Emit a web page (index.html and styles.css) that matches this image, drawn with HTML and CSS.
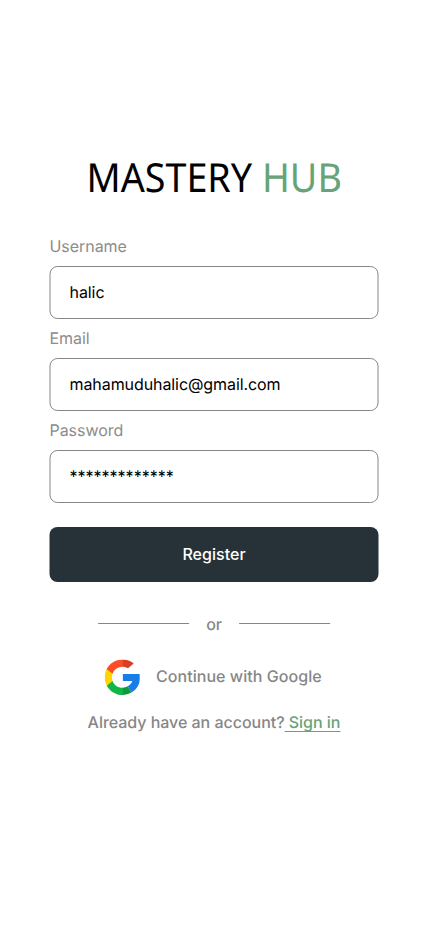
FILE: index.html
```html
<!DOCTYPE html>
<html lang="en">
<head>
<meta charset="utf-8">
<title>Mastery Hub</title>
<link rel="stylesheet" href="styles.css">
</head>
<body>
<main class="page">
  <h1 class="brand">MASTERY <span class="accent">HUB</span></h1>
  <form class="form">
    <label class="label" for="username">Username</label>
    <div class="field" id="username">halic</div>
    <label class="label" for="email">Email</label>
    <div class="field" id="email">mahamuduhalic@gmail.com</div>
    <label class="label" for="password">Password</label>
    <div class="field" id="password">*************</div>
    <button class="submit" type="button">Register</button>
  </form>
  <div class="divider"><span class="line"></span><span class="or">or</span><span class="line"></span></div>
  <div class="google">
    <svg class="logo" viewBox="0 0 512 512">
      <path fill="#ffd500" d="M113.470 309.400 96 376l-65.500 1.300C11 341.200 0 299.900 0 256c0-42.500 10.300-82.500 28.600-117.700l58 10.600 25.400 57.600c-5.300 15.500-8.200 32.200-8.200 49.500 0 18.800 3.400 36.800 9.670 53.400Z"/>
      <path fill="#167ee6" d="M507.500 208.200c2.900 15.500 4.500 31.500 4.500 47.800 0 80.500-37 153-95.700 199.600-16 12.900-24 17-32 22l-51.500-90.200c30-17.600 53.300-45 65.700-77.900h-136.900V208.200Z"/>
      <path fill="#0fb744" d="M262 512h-6C158.500 512 73.700 457.500 30.500 377.300l83-67.900C135 367.100 190.700 408.200 256 408.200h6Z"/>
      <path fill="#0f993e" d="M384.300 477.600C347 499 303 512 256 512V408.200c28 0 54.300-7.600 76.900-20.800Z"/>
      <path fill="#ff4b26" d="M262 0v103.800h-6c-66.700 0-123.400 43-144 102.700l-83.400-68.200C71.200 56.100 157 0 256 0Z"/>
      <path fill="#d93f21" d="m419.400 58.900-82.900 67.900c-23.400-14.600-51-23-80.500-23V0c62.100 0 119 22.100 163.400 58.900Z"/>
    </svg>
    <span>Continue with Google</span>
  </div>
  <p class="signin">Already have an account?<a class="link">&nbsp;Sign in</a></p>
</main>
</body>
</html>
```
FILE: styles.css
```css
* { box-sizing: border-box; }
body { margin: 0; background: #fff; font-family: Inter, sans-serif; font-size: 16px; color: #000; text-rendering: geometricPrecision; }
.page { width: 428px; height: 926px; padding: 149px 49px 0; overflow: hidden; }
.brand { margin: 0; height: 87px; font: 400 40px/56px "Noto Sans", sans-serif; text-align: center; white-space: pre; transform: translateX(.2px) scaleX(.942); }
.accent { color: #67a378; }
.form { display: flex; flex-direction: column; width: 329px; transform: translateX(.5px); }
.label { height: 30px; line-height: 20px; color: #8c8c8c; letter-spacing: -.05px; }
.field { height: 53px; margin-bottom: 9px; padding: 0 19px; border: 1px solid #868686; border-radius: 8px; line-height: 51px; letter-spacing: -.08px; }
#password { letter-spacing: 0; }
.submit { height: 55px; margin-top: 15px; padding: 0 0 2px; border: 0; border-radius: 8px; background: #263238; color: #fff; font: 500 16px Inter, sans-serif; letter-spacing: .03px; }
.divider { display: flex; justify-content: center; align-items: center; height: 20px; margin-top: 32px; gap: 17px; color: #868686; font-weight: 500; transform: translateX(.1px); }
.line { width: 91px; height: 1px; margin-top: -1px; background: #868686; }
.google { display: flex; align-items: center; height: 36px; margin: 25px 0 0 55.5px; gap: 16px; color: #868686; font-weight: 500; letter-spacing: .05px; }
.google span { margin-top: -2px; }
.logo { width: 35.5px; height: 35.5px; transform: translate(-.3px, .5px); }
.signin { margin: 17px 0 0; text-align: center; line-height: 20px; color: #868686; font-weight: 500; white-space: nowrap; letter-spacing: -.03px; }
.link { color: #67a378; text-decoration: underline; text-decoration-thickness: 1px; text-underline-offset: 3px; text-decoration-skip-ink: none; }
```
